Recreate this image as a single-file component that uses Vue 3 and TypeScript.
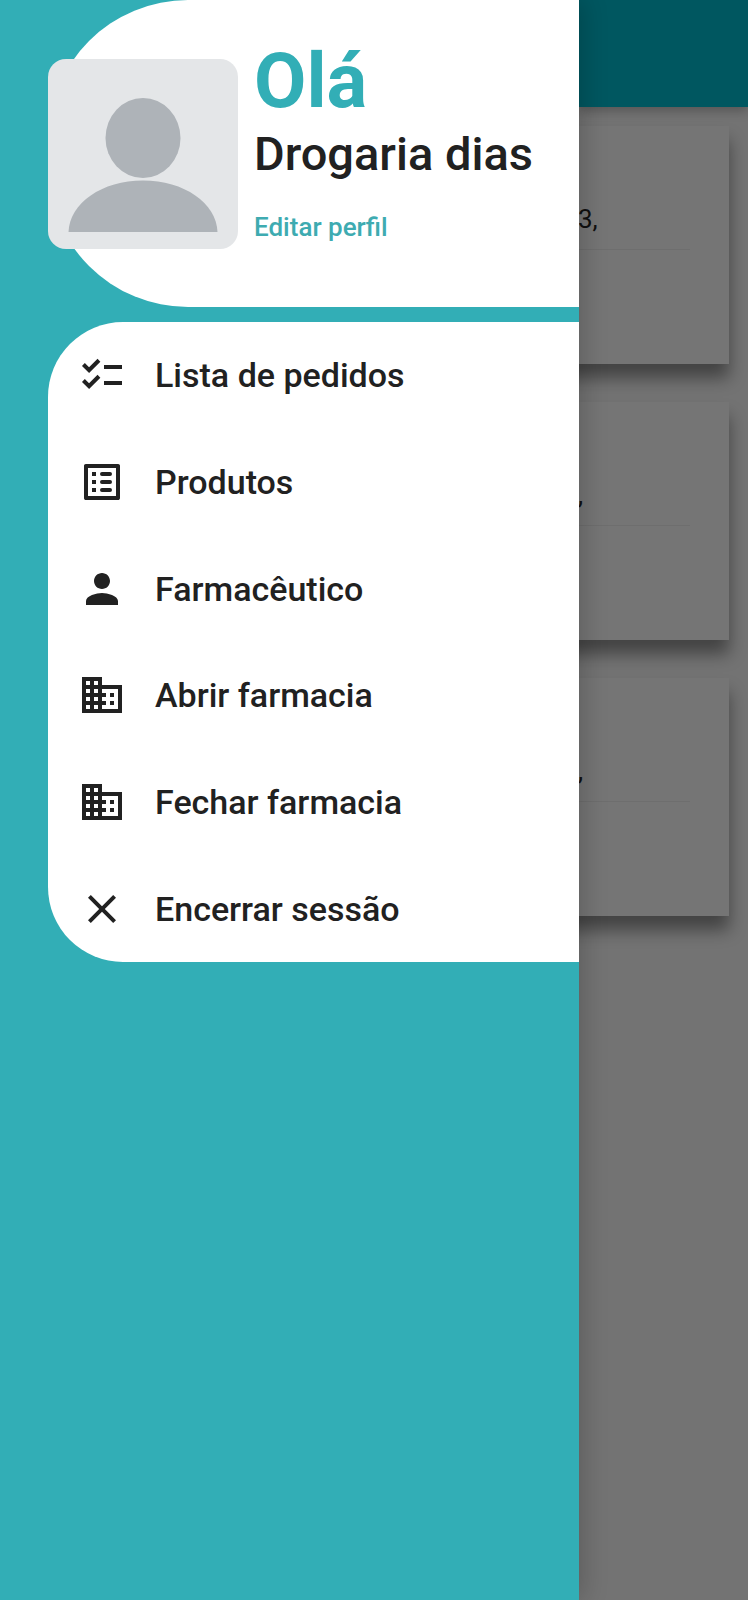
<script setup lang="ts">
interface MenuItem {
  label: string
  icon: string
}

const business =
  'M12 7V3H2v18h20V7H12zM6 19H4v-2h2v2zm0-4H4v-2h2v2zm0-4H4V9h2v2zm0-4H4V5h2v2zm4 12H8v-2h2v2zm0-4H8v-2h2v2zm0-4H8V9h2v2zm0-4H8V5h2v2zm10 12h-8v-2h2v-2h-2v-2h2v-2h-2V9h8v10zm-2-8h-2v2h2v-2zm0 4h-2v2h2v-2z'

const items: MenuItem[] = [
  {
    label: 'Lista de pedidos',
    icon: 'M22 7h-9v2h9V7zm0 8h-9v2h9v-2zM5.54 11L2 7.46l1.41-1.41 2.12 2.12 4.24-4.24 1.41 1.41L5.54 11zm0 8L2 15.46l1.41-1.41 2.12 2.12 4.24-4.24 1.41 1.41L5.54 19z',
  },
  {
    label: 'Produtos',
    icon: 'M19 5v14H5V5h14m1.1-2H3.9c-.5 0-.9.4-.9.9v16.2c0 .4.4.9.9.9h16.2c.4 0 .9-.5.9-.9V3.9c0-.5-.5-.9-.9-.9zM12 7h4a1 1 0 0 1 0 2h-4a1 1 0 0 1 0-2zm0 4h4a1 1 0 0 1 0 2h-4a1 1 0 0 1 0-2zm0 4h4a1 1 0 0 1 0 2h-4a1 1 0 0 1 0-2zM7 7h2v2H7zm0 4h2v2H7zm0 4h2v2H7z',
  },
  {
    label: 'Farmacêutico',
    icon: 'M12 12c2.21 0 4-1.79 4-4s-1.79-4-4-4-4 1.79-4 4 1.79 4 4 4zm0 2c-2.67 0-8 1.34-8 4v2h16v-2c0-2.66-5.33-4-8-4z',
  },
  { label: 'Abrir farmacia', icon: business },
  { label: 'Fechar farmacia', icon: business },
  {
    label: 'Encerrar sessão',
    icon: 'M19 6.41L17.59 5 12 10.59 6.41 5 5 6.41 10.59 12 5 17.59 6.41 19 12 13.41 17.59 19 19 17.59 13.41 12z',
  },
]

const orders: string[] = ['3,', ',', ',']
</script>

<template>
  <div class="screen">
    <aside class="drawer">
      <header class="profile">
        <svg class="avatar" viewBox="0 0 190 190" role="img" aria-label="Foto do perfil">
          <ellipse cx="95" cy="79" rx="37.5" ry="40" />
          <path d="M20.5 173C21.5 144 54 121.500 95 121.500S168.500 144 169.500 173z" />
        </svg>
        <div class="who">
          <h1 class="hello">Olá</h1>
          <p class="name">Drogaria dias</p>
          <a class="edit" href="#">Editar perfil</a>
        </div>
      </header>
      <nav class="menu">
        <button v-for="item in items" :key="item.label" class="item" type="button">
          <svg class="icon" viewBox="0 0 24 24" aria-hidden="true"><path :d="item.icon" /></svg>
          <span>{{ item.label }}</span>
        </button>
      </nav>
    </aside>
    <main class="page">
      <div class="bar"></div>
      <div class="orders">
        <article v-for="(text, i) in orders" :key="i" class="card">
          <p class="address">{{ text }}</p>
        </article>
      </div>
    </main>
  </div>
</template>

<style>
body {
  margin: 0;
}
</style>

<style scoped>
.screen {
  display: flex;
  min-height: 100vh;
  overflow: hidden;
  background: #737373;
  font-family: Roboto, "Liberation Sans", sans-serif;
  color: #212121;
}

.drawer {
  position: relative;
  z-index: 1;
  flex: 0 0 579px;
  box-sizing: border-box;
  display: flex;
  flex-direction: column;
  gap: 15px;
  padding-left: 48px;
  background: #32aeb6;
  box-shadow: 4px 0 24px rgba(0, 0, 0, 0.2);
}

.profile {
  display: flex;
  align-items: center;
  gap: 16px;
  height: 307px;
  background: #fff;
  border-radius: 140px 0 0 140px;
}

.avatar {
  flex: none;
  width: 190px;
  height: 190px;
  border-radius: 18px;
  background: #e4e6e8;
  fill: #aeb3b8;
}

.who {
  display: flex;
  flex-direction: column;
  align-items: flex-start;
  height: 230px;
}

.hello {
  margin: 0;
  font-size: 76px;
  line-height: 84px;
  font-weight: 700;
  color: #32aeb6;
}

.name {
  margin: 0;
  font-size: 47px;
  line-height: 62px;
  font-weight: 500;
  white-space: nowrap;
}

.edit {
  margin-top: 26px;
  font-size: 26px;
  line-height: 32px;
  font-weight: 500;
  color: #3eabb1;
  text-decoration: none;
}

.menu {
  display: grid;
  grid-auto-rows: 1fr;
  min-height: 640px;
  background: #fff;
  border-radius: 75px 0 0 75px;
}

.item {
  display: flex;
  align-items: center;
  gap: 29px;
  padding: 0 30px;
  border: 0;
  background: none;
  font: inherit;
  font-size: 34px;
  line-height: 40px;
  font-weight: 500;
  color: inherit;
  text-align: left;
}

.icon {
  flex: none;
  width: 48px;
  height: 48px;
  fill: currentColor;
}

.page {
  flex: 1;
  min-width: 0;
}

.bar {
  height: 107px;
  background: #005760;
  box-shadow: 0 4px 10px rgba(0, 0, 0, 0.25);
}

.orders {
  display: grid;
  gap: 38px;
  padding: 19px 19px 0 0;
}

.card {
  box-sizing: border-box;
  height: 238px;
  margin-left: -40px;
  padding: 77px 39px 0 39px;
  background: #757575;
  box-shadow: 0 14px 16px rgba(0, 0, 0, 0.42);
}

.address {
  margin: 0;
  padding-bottom: 14px;
  border-bottom: 1px solid #6e6e6e;
  font-size: 26px;
  line-height: 32px;
  color: #101010;
}
</style>
